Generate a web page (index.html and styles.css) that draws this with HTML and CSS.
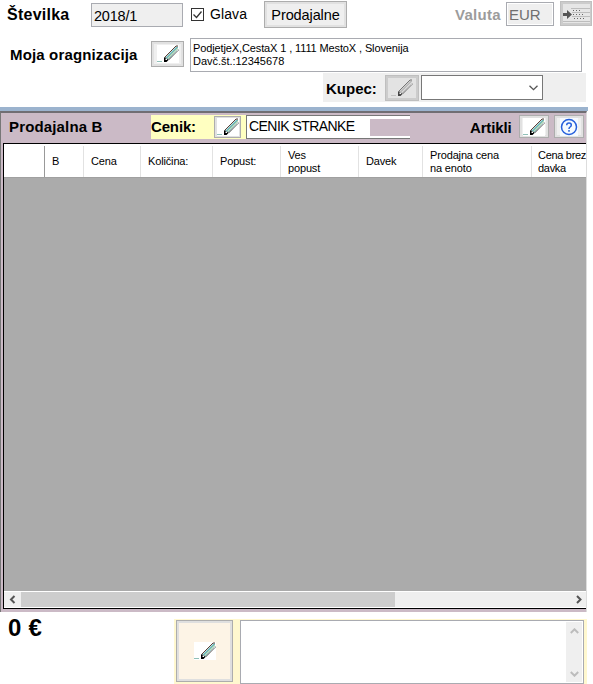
FILE: index.html
```html
<!DOCTYPE html>
<html lang="sl">
<head>
<meta charset="utf-8">
<title>Prodajalna</title>
<link rel="stylesheet" href="styles.css">
</head>
<body>
<svg width="0" height="0" class="defs" aria-hidden="true">
  <symbol id="pencil" viewBox="0 0 22 18">
    <rect width="22" height="18" class="paper"/>
    <path d="M0 16.500h5" class="stroke-line"/>
    <path d="M8 13L19.500 1.500H21V4L11 14.500Z" class="body"/>
    <path d="M10.500 13.500L21 3" class="shine"/>
    <path d="M7.500 12.500L19 1h2" class="edge brown"/>
    <path d="M11.500 15L21.500 5" class="edge" stroke-dasharray="1.200 .3"/>
    <path d="M7 12.500h1.500l3 2.500-2 2H7z" class="tip"/>
    <path d="M8.500 13.500h1.500v1.500H8.500z" fill="#fff"/>
  </symbol>
</svg>
<header>
  <div class="row number-row">
    <label class="bold number-label">Številka</label>
    <div class="field number">2018/1</div>
    <svg class="check" viewBox="0 0 13 13"><rect x=".5" y=".5" width="12" height="12"/><path d="M2.500 6.500l3 3 5-6"/></svg>
    <label class="glava">Glava</label>
    <button class="shops"><span>Prodajalne</span></button>
    <label class="bold valuta">Valuta</label>
    <div class="field currency">EUR</div>
    <button class="insert"><svg width="27" height="19" viewBox="0 0 27 19"><rect width="27" height="19" fill="#e6e6e6"/><path d="M8 4.500h19M9 8.500h18M9 12.500h18M0 17.500h27" stroke="#bdbdbd"/><path d="M10 6.500h7M10 10.500h11M11 14.500h10" stroke="#666" stroke-dasharray="1 2"/><path d="M0 9h4V6l5 4.500L4 15v-3H0z" fill="#555"/></svg></button>
  </div>
  <div class="row org-row">
    <label class="bold org-label">Moja oragnizacija</label>
    <button class="org-edit"><svg width="22" height="18"><use href="#pencil"/></svg></button>
    <div class="address"><span class="line1">PodjetjeX,CestaX 1 , 1111 MestoX , Slovenija</span><br><span class="line2">Davč.št.:12345678</span></div>
  </div>
  <div class="row buyer-row">
    <label class="bold buyer-label">Kupec:</label>
    <button class="buyer-edit"><svg width="22" height="18"><use href="#pencil"/></svg></button>
    <div class="combo"><svg width="9" height="6" viewBox="0 0 9 6"><path d="M.5 .7l4 4 4-4"/></svg></div>
  </div>
</header>
<div class="divider"></div>
<main>
  <div class="row toolbar">
    <span class="bold shop-name">Prodajalna B</span>
    <div class="row price-list">
      <span class="bold cenik">Cenik:</span>
      <button class="small-edit"><svg width="22" height="18"><use href="#pencil"/></svg></button>
      <div class="price-field"><span>CENIK STRANKE</span><i></i></div>
    </div>
    <span class="bold artikli">Artikli</span>
    <button class="items-edit"><svg width="22" height="18"><use href="#pencil"/></svg></button>
    <button class="help"><svg width="18" height="18" viewBox="0 0 18 18"><rect width="18" height="18" fill="#f5faff"/><circle cx="9" cy="9" r="7.500"/><path d="M6.700 7.200Q6.700 5 9 5t2.300 2q0 1.200-1.200 2Q9 9.700 9 11M9 12v1.700"/></svg></button>
  </div>
  <div class="grid">
    <div class="columns">
      <div class="first"></div><div>B</div><div>Cena</div><div>Količina:</div><div>Popust:</div><div>Ves<br>popust</div><div>Davek</div><div>Prodajna cena<br>na enoto</div><div>Cena brez<br>davka</div>
    </div>
    <div class="cells"></div>
    <div class="row hscroll">
      <svg width="17" height="15" viewBox="0 0 17 15"><path d="M10.500 4L7 7.500l3.500 3.500"/></svg>
      <div class="thumb"></div>
      <svg class="right" width="17" height="15" viewBox="0 0 17 15"><path d="M7 4l3.500 3.500L7 11"/></svg>
    </div>
  </div>
</main>
<footer>
  <div class="bold total">0 €</div>
  <div class="row note">
    <button class="note-edit"><svg width="22" height="18"><use href="#pencil"/></svg></button>
    <div class="memo"><div class="vscroll"><svg width="9" height="6" viewBox="0 0 9 6"><path d="M.8 5l3.700-3.700L8.200 5"/></svg><svg width="9" height="6" viewBox="0 0 9 6"><path d="M.8 1l3.700 3.700L8.200 1"/></svg></div></div>
  </div>
</footer>
</body>
</html>
```
FILE: styles.css
```css
* { box-sizing: border-box; }
body { margin: 0; width: 593px; height: 684px; overflow: hidden; background: #fff; color: #000; font: 14px/16px "Liberation Sans", Arial, sans-serif; }
svg { display: block; flex: none; }
.defs { position: absolute; }
.row { display: flex; align-items: flex-start; }
.row > * { flex: none; }
.bold { font-weight: bold; white-space: nowrap; }
button { display: flex; align-items: center; justify-content: center; padding: 0; border: 1px solid #adadad; background: #efefef; box-shadow: inset 0 0 0 2px #e1e1e1; font: inherit; color: inherit; }
.field { border: 1px solid #a9abb1; background: #efefef; white-space: nowrap; }
.paper { fill: #fff; }
.stroke-line { stroke: #8fc0b8; }
.body { fill: #74b9bb; }
.shine { stroke: #c9dfae; stroke-width: 1; }
.edge { fill: none; stroke: #171717; stroke-width: 1; }
.brown { stroke: #5c4038; }
.tip { fill: #000; }

header { height: 107px; }
.number-row { height: 38px; }
.number-label { width: 84px; margin: 5px 0 0 7px; font-size: 16px; line-height: 19px; letter-spacing: .25px; }
.number { width: 92px; height: 24px; margin-top: 3px; padding: 4px 2px; font-size: 14.500px; letter-spacing: -.2px; }
.check { width: 13px; height: 13px; margin: 8px 6px 0 8px; fill: #fff; stroke: #333; }
.check path { fill: none; stroke-width: 1.3; }
.glava { width: 54px; margin-top: 6px; letter-spacing: .1px; }
.shops { width: 83px; height: 27px; margin-top: 1px; font-size: 14.500px; letter-spacing: -.1px; }
.valuta { width: 51px; margin: 7px 0 0 108px; font-size: 15px; letter-spacing: .3px; color: #9c9c9c; }
.currency { width: 48px; height: 24px; margin-top: 2px; padding: 4px 2px; font-size: 15px; color: #707070; box-shadow: inset 0 0 0 1px #fff; }
.insert { width: 32px; height: 25px; margin: 1px 0 0 6px; border-color: #c0c0c0; background: #ccc; box-shadow: none; }

.org-row { height: 35px; }
.org-label { width: 141px; margin: 9px 0 0 10px; font-size: 15px; letter-spacing: .15px; }
.org-edit { width: 33px; height: 26px; margin-top: 3px; }
.address { width: 392px; height: 34px; margin-left: 6px; padding: 3px 2px; border: 1px solid #a9abb1; font-size: 11px; line-height: 13px; white-space: nowrap; }
.line1 { letter-spacing: -.12px; }
.line2 { letter-spacing: -.03px; }
.buyer-row { width: 263px; height: 29px; margin-left: 323px; padding-left: 3px; background: #efefef; }
.buyer-label { width: 59px; margin-top: 8px; font-size: 15px; }
.buyer-edit { width: 34px; height: 26px; margin-top: 2px; border-color: #bfbfbf; background: #e3e3e3; box-shadow: inset 0 0 0 2px #ccc; }
.buyer-edit svg { filter: grayscale(1) opacity(.7); }
.buyer-edit .paper, .buyer-edit use { --paper: #e3e3e3; }
.paper { fill: var(--paper, #fff); }
.combo { display: flex; align-items: center; justify-content: flex-end; width: 122px; height: 25px; margin: 2px 0 0 2px; padding-right: 4px; border: 1px solid #777; background: #fff; }
.combo path { fill: none; stroke: #555; stroke-width: 1.3; }
.divider { width: 588px; height: 4px; background: #9bb3ce; }

main { width: 587px; height: 501px; border-top: 2px solid #706e73; border-left: 1px solid #777; border-right: 1px solid #ddd; background: #cbbac6; }
.toolbar { height: 30px; }
.shop-name { width: 142px; margin: 6px 0 0 8px; font-size: 15px; letter-spacing: .15px; }
.price-list { width: 259px; height: 24px; margin-top: 2px; background: #ffffc1; }
.cenik { width: 63px; margin-top: 4px; font-size: 15px; letter-spacing: -.15px; }
.small-edit { width: 27px; height: 22px; margin-top: 1px; }
.price-field { display: flex; width: 164px; height: 24px; margin-left: 5px; padding-left: 2px; border: 1px solid #777; border-right: 0; background: #fff; line-height: 21px; white-space: nowrap; }
.price-field span { width: 121px; letter-spacing: -.55px; }
.price-field i { width: 40px; height: 17px; margin-top: 3px; background: #cbbac6; }
.artikli { width: 49px; margin: 7px 0 0 60px; font-size: 15px; letter-spacing: -.15px; }
.items-edit, .help { width: 30px; height: 23px; margin-top: 2px; }
.help { margin-left: 5px; }
.help circle, .help path { fill: none; stroke: #245edb; stroke-width: 1.5; }
.grid { width: 583px; height: 466px; margin-left: 2px; border: solid #000; border-width: 1px 0 1px 1px; background: #fff; overflow: hidden; }
.columns { display: grid; grid-template-columns: 41px 39px 57px 72px 68px 78px 64px 109px 54px; height: 34px; padding-top: 2px; border-bottom: 1px solid #a0a0a0; font-size: 11px; line-height: 13px; letter-spacing: -.15px; }
.columns div { display: flex; flex-direction: column; justify-content: center; padding-left: 7px; border-right: 1px solid #e2e2e2; white-space: nowrap; }
.columns .first { border-color: #999; }
.columns div:last-child { padding-left: 6px; border-right: 0; letter-spacing: -.3px; }
.cells { height: 413px; background: #ababab; }
.hscroll { height: 15px; margin-top: 1px; background: #efefef; }
.hscroll path { fill: none; stroke: #555; stroke-width: 2; }
.thumb { width: 374px; height: 15px; background: #cdcdcd; }
.right { margin-left: 175px; }
footer { display: flex; height: 72px; padding-top: 7px; }
.total { width: 166px; margin-left: 8px; font-size: 24px; line-height: 18px; letter-spacing: .3px; }
.note { width: 413px; height: 65px; padding: 1px 0 0 2px; background: #fff8cf; }
.note-edit { width: 57px; height: 62px; background: #fdf4e6; box-shadow: inset 0 0 0 2px #dfdfdf; }
.memo { display: flex; justify-content: flex-end; width: 344px; height: 64px; margin-left: 7px; padding: 1px; border: 1px solid #a9abb1; background: #fff; }
.vscroll { display: flex; flex-direction: column; justify-content: space-between; align-items: center; width: 16px; height: 60px; padding: 6px 0 5px; background: #efefef; }
.vscroll path { fill: none; stroke: #bcbcbc; stroke-width: 2; }
```
